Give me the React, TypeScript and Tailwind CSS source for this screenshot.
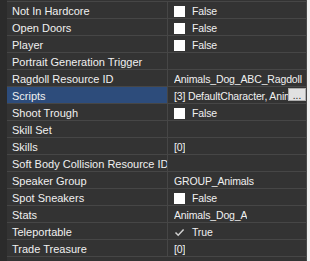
import React from 'react';

type Prop = {
  name: string;
  kind: 'bool' | 'text' | 'none' | 'collection';
  value?: string;
  checked?: boolean;
  selected?: boolean;
};

const props: Prop[] = [
  { name: 'Not In Hardcore', kind: 'bool', checked: false },
  { name: 'Open Doors', kind: 'bool', checked: false },
  { name: 'Player', kind: 'bool', checked: false },
  { name: 'Portrait Generation Trigger', kind: 'none' },
  { name: 'Ragdoll Resource ID', kind: 'text', value: 'Animals_Dog_ABC_Ragdoll' },
  { name: 'Scripts', kind: 'collection', value: '[3] DefaultCharacter, Animals', selected: true },
  { name: 'Shoot Trough', kind: 'bool', checked: false },
  { name: 'Skill Set', kind: 'none' },
  { name: 'Skills', kind: 'text', value: '[0]' },
  { name: 'Soft Body Collision Resource ID', kind: 'none' },
  { name: 'Speaker Group', kind: 'text', value: 'GROUP_Animals' },
  { name: 'Spot Sneakers', kind: 'bool', checked: false },
  { name: 'Stats', kind: 'text', value: 'Animals_Dog_A' },
  { name: 'Teleportable', kind: 'bool', checked: true },
  { name: 'Trade Treasure', kind: 'text', value: '[0]' },
];

function CheckBox({ checked }: { checked: boolean }) {
  if (checked) {
    return (
      <svg width="11" height="11" viewBox="0 0 11 11" className="shrink-0">
        <path d="M1.5 5.5 L4.2 8.2 L9.6 2.6" fill="none" stroke="#d0d0d0" strokeWidth="1.5" />
      </svg>
    );
  }
  return <div className="w-[11px] h-[11px] bg-white shrink-0" />;
}

function Row({ p }: { p: Prop }) {
  return (
    <div className="flex h-[17px] border-b border-[#464646]">
      <div
        className={`w-[160px] shrink-0 pl-[5px] pt-[2px] text-[11px] overflow-hidden whitespace-nowrap ${
          p.selected ? 'bg-[#2d4c7b]' : ''
        }`}
      >
        {p.name}
      </div>
      <div className="w-px bg-[#464646] shrink-0" />
      <div className="flex-1 flex min-w-0 pl-[6px] pt-[2px] text-[10.5px] tracking-[-0.15px] whitespace-nowrap">
        {p.kind === 'bool' && (
          <div className="flex items-start gap-[7px]">
            <div className="pt-[2px]">
              <CheckBox checked={!!p.checked} />
            </div>
            <span>{p.checked ? 'True' : 'False'}</span>
          </div>
        )}
        {p.kind === 'text' && <div className="overflow-hidden">{p.value}</div>}
        {p.kind === 'collection' && (
          <>
            <div className="flex-1 min-w-0 overflow-hidden">{p.value}</div>
            <div className="shrink-0 -mt-[1px] w-[18px] h-[13px] bg-[#e1e1e1] border border-[#adadad] text-[#222] text-[10px] leading-[14px] flex justify-center tracking-normal">
              ...
            </div>
          </>
        )}
      </div>
    </div>
  );
}

export default function App() {
  return (
    <div
      className="w-[310px] h-[261px] flex bg-[#333333] text-[#f0f0f0] leading-[15px] overflow-hidden"
      style={{ fontFamily: '"Liberation Sans", Arial, sans-serif' }}
    >
      <div className="w-[7px] shrink-0 bg-[#2b2b2b]" />
      <div className="w-[299px] shrink-0">
        <div className="h-px" />
        <div className="border-t border-[#464646]">
          {props.map((p) => (
            <Row key={p.name} p={p} />
          ))}
        </div>
      </div>
      <div className="w-px shrink-0 bg-[#464646]" />
      <div className="flex-1 bg-[#f0f0f0]" />
    </div>
  );
}
